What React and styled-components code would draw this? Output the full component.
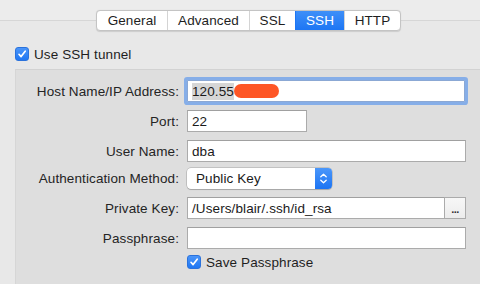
import React from "react";
import styled, { createGlobalStyle } from "styled-components";

const Global = createGlobalStyle`
  html, body { margin: 0; padding: 0; }
  body {
    width: 480px; height: 284px; overflow: hidden;
    background: #e8e8e8;
    font-family: "Liberation Sans", Arial, sans-serif;
    font-size: 13.5px; letter-spacing: 0.1px; color: #242424;
  }
  * { box-sizing: border-box; }
`;

const Window = styled.div`
  width: 480px; height: 284px; display: flex; flex-direction: column;
`;

const Header = styled.div`
  position: relative;
  height: 31px;
  padding: 10px 0 0 96px;
  background: linear-gradient(#ececec 0, #ececec 20px, #e8e8e8 21px);
  &::before {
    content: ""; position: absolute; left: 0; right: 0; top: 20px;
    height: 1px; background: #d6d6d6;
  }
`;

const Segmented = styled.div`
  position: relative; z-index: 1;
  display: flex; height: 21px;
  background: #fff;
  border: 1px solid #c4c4c4;
  border-radius: 4px;
  box-shadow: 0 0.5px 1px rgba(0,0,0,0.12);
  overflow: hidden;
  width: max-content;
`;

const Tab = styled.div`
  width: ${p => p.$w}px;
  display: flex; align-items: center; justify-content: center;
  font-size: 13.5px;
  color: ${p => (p.$active ? "#fff" : "#1e1e1e")};
  background: ${p => (p.$active ? "linear-gradient(#3e8ff8, #1d76f4)" : "transparent")};
  border-left: ${p => (p.$first ? "none" : "1px solid #d4d4d4")};
  ${p => p.$active && "border-left-color: #1d76f4;"}
`;

const Body = styled.div`
  flex: 1; display: flex; flex-direction: column;
  padding: 16px 0 0 15px;
`;

const CheckRow = styled.label`
  display: flex; align-items: center; gap: 5px;
  height: 14px; color: #1e1e1e;
`;

const Box = styled.span`
  width: 14px; height: 14px; border-radius: 3px;
  background: linear-gradient(#4a95f9, #1f77f3);
  border: 1px solid #2a72dc;
  display: flex; align-items: center; justify-content: center;
  flex: none;
`;

const Check = () => (
  <Box>
    <svg width="10" height="10" viewBox="0 0 10 10">
      <path d="M2 5.3 L4.1 7.6 L8.2 2.2" fill="none" stroke="#fff" strokeWidth="1.7" strokeLinecap="round" strokeLinejoin="round" />
    </svg>
  </Box>
);

const Panel = styled.div`
  margin-top: 8px;
  flex: 1;
  background: #dedede;
  border-top: 1px solid #d2d2d2;
  border-left: 1px solid #d6d6d6;
  padding: 10px 14px 0 0;
  display: flex; flex-direction: column;
`;

const Row = styled.div`
  display: flex; align-items: center;
  margin-top: ${p => p.$mt ?? 8}px;
  height: ${p => p.$h || 22}px;
`;

const Label = styled.div`
  width: 163px; text-align: right;
  margin-right: 8px; flex: none; color: #242424;
  white-space: nowrap;
`;

const Field = styled.div`
  position: relative;
  height: ${p => p.$h || 22}px;
  width: ${p => (p.$w ? p.$w + "px" : "auto")};
  flex: ${p => (p.$w ? "none" : 1)};
  background: #fff;
  border: 1px solid #ababab;
  border-top-color: #a0a0a0;
  display: flex; align-items: center;
  padding-left: 4px;
  color: #1a1a1a;
  ${p => p.$focus && `
    border-color: #8ba8d4;
    box-shadow: 0 0 0 3px #86aee8;
    border-radius: 1px;
    margin-right: 1px;
  `}
  ${p => p.$joined && "border-right: none;"}
`;

const Selected = styled.span`
  background: #d6d6d6; padding: 1px 0;
  display: inline-flex; align-items: center;
`;

const Redact = styled.span`
  display: inline-block; width: 45px; height: 14px;
  background: #fe5626; border-radius: 7px;
`;

const DotsButton = styled.div`
  width: 22px; height: 22px; flex: none;
  border: 1px solid #ababab;
  background: linear-gradient(#f7f7f7, #ececec);
  display: flex; align-items: flex-end; justify-content: center;
  padding-bottom: 5px; font-size: 11px; font-weight: bold; color: #333;
  line-height: 8px; letter-spacing: -0.5px;
`;

const Popup = styled.div`
  width: 145px; height: 21px; flex: none;
  display: flex; align-items: stretch;
  background: #fff;
  border-radius: 4px;
  box-shadow: 0 0 0 0.5px rgba(0,0,0,0.25), 0 1px 1px rgba(0,0,0,0.15);
  overflow: hidden;
`;

const PopupText = styled.div`
  flex: 1; display: flex; align-items: center; padding-left: 9px; color: #1a1a1a;
`;

const Stepper = styled.div`
  width: 17px; background: linear-gradient(#4b97fa, #1c74f3);
  display: flex; align-items: center; justify-content: center;
`;

const FieldsRow = styled.div`
  display: flex; flex: 1;
`;

export default function App() {
  return (
    <Window>
      <Global />
      <Header>
        <Segmented>
          <Tab $w={70} $first>General</Tab>
          <Tab $w={82}>Advanced</Tab>
          <Tab $w={46}>SSL</Tab>
          <Tab $w={49} $active>SSH</Tab>
          <Tab $w={56}>HTTP</Tab>
        </Segmented>
      </Header>
      <Body>
        <CheckRow><Check />Use SSH tunnel</CheckRow>
        <Panel>
          <Row $mt={0}>
            <Label>Host Name/IP Address:</Label>
            <Field $focus>
              <Selected>120.55</Selected><Redact />
            </Field>
          </Row>
          <Row>
            <Label>Port:</Label>
            <Field $w={120}>22</Field>
          </Row>
          <Row>
            <Label>User Name:</Label>
            <Field>dba</Field>
          </Row>
          <Row $mt={6} $h={21}>
            <Label>Authentication Method:</Label>
            <Popup>
              <PopupText>Public Key</PopupText>
              <Stepper>
                <svg width="9" height="13" viewBox="0 0 9 13">
                  <path d="M1.8 4.8 L4.5 2.2 L7.2 4.8 M1.8 8.2 L4.5 10.8 L7.2 8.2" fill="none" stroke="#fff" strokeWidth="1.3" strokeLinecap="round" strokeLinejoin="round" />
                </svg>
              </Stepper>
            </Popup>
          </Row>
          <Row>
            <Label>Private Key:</Label>
            <FieldsRow>
              <Field $joined>/Users/blair/.ssh/id_rsa</Field>
              <DotsButton>...</DotsButton>
            </FieldsRow>
          </Row>
          <Row>
            <Label>Passphrase:</Label>
            <Field></Field>
          </Row>
          <Row $mt={6} $h={14}>
            <Label />
            <CheckRow><Check />Save Passphrase</CheckRow>
          </Row>
        </Panel>
      </Body>
    </Window>
  );
}
